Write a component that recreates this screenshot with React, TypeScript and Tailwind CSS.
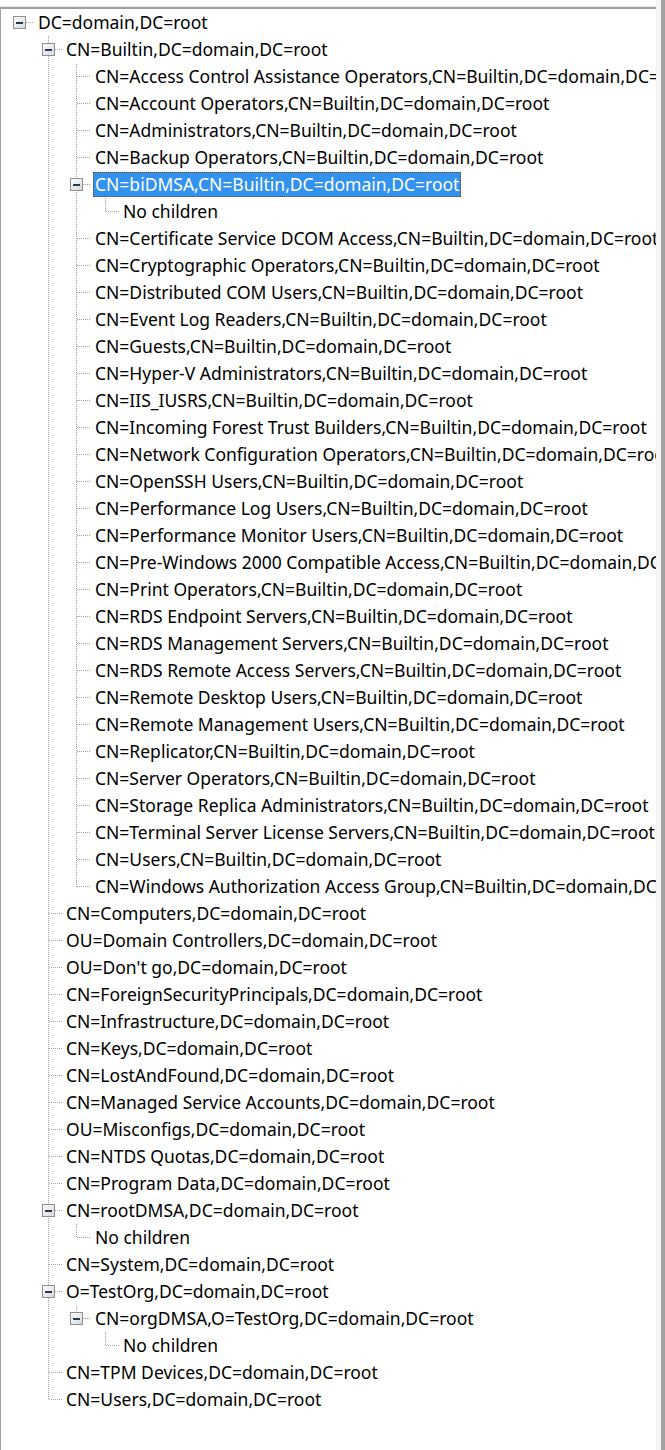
import React from 'react';

type TreeNode = {
  label: string;
  selected?: boolean;
  children?: TreeNode[];
};

const builtin = (name: string): TreeNode => ({ label: `CN=${name},CN=Builtin,DC=domain,DC=root` });
const top = (rdn: string): TreeNode => ({ label: `${rdn},DC=domain,DC=root` });
const noChildren: TreeNode = { label: 'No children' };

const tree: TreeNode = {
  label: 'DC=domain,DC=root',
  children: [
    {
      label: 'CN=Builtin,DC=domain,DC=root',
      children: [
        builtin('Access Control Assistance Operators'),
        builtin('Account Operators'),
        builtin('Administrators'),
        builtin('Backup Operators'),
        { label: 'CN=biDMSA,CN=Builtin,DC=domain,DC=root', selected: true, children: [noChildren] },
        builtin('Certificate Service DCOM Access'),
        builtin('Cryptographic Operators'),
        builtin('Distributed COM Users'),
        builtin('Event Log Readers'),
        builtin('Guests'),
        builtin('Hyper-V Administrators'),
        builtin('IIS_IUSRS'),
        builtin('Incoming Forest Trust Builders'),
        builtin('Network Configuration Operators'),
        builtin('OpenSSH Users'),
        builtin('Performance Log Users'),
        builtin('Performance Monitor Users'),
        builtin('Pre-Windows 2000 Compatible Access'),
        builtin('Print Operators'),
        builtin('RDS Endpoint Servers'),
        builtin('RDS Management Servers'),
        builtin('RDS Remote Access Servers'),
        builtin('Remote Desktop Users'),
        builtin('Remote Management Users'),
        builtin('Replicator'),
        builtin('Server Operators'),
        builtin('Storage Replica Administrators'),
        builtin('Terminal Server License Servers'),
        builtin('Users'),
        builtin('Windows Authorization Access Group'),
      ],
    },
    top('CN=Computers'),
    top('OU=Domain Controllers'),
    top("OU=Don't go"),
    top('CN=ForeignSecurityPrincipals'),
    top('CN=Infrastructure'),
    top('CN=Keys'),
    top('CN=LostAndFound'),
    top('CN=Managed Service Accounts'),
    top('OU=Misconfigs'),
    top('CN=NTDS Quotas'),
    top('CN=Program Data'),
    { ...top('CN=rootDMSA'), children: [noChildren] },
    top('CN=System'),
    {
      ...top('O=TestOrg'),
      children: [{ label: 'CN=orgDMSA,O=TestOrg,DC=domain,DC=root', children: [noChildren] }],
    },
    top('CN=TPM Devices'),
    top('CN=Users'),
  ],
};

type Row = {
  label: string;
  level: number;
  guides: boolean[];
  isLast: boolean;
  hasParent: boolean;
  expanded: boolean;
  selected: boolean;
};

function flatten(node: TreeNode, level: number, guides: boolean[], isLast: boolean, hasParent: boolean, out: Row[]) {
  out.push({
    label: node.label,
    level,
    guides,
    isLast,
    hasParent,
    expanded: !!node.children,
    selected: !!node.selected,
  });
  const kids = node.children ?? [];
  kids.forEach((kid, i) => flatten(kid, level + 1, [...guides, !isLast], i === kids.length - 1, true, out));
  return out;
}

const rows = flatten(tree, 0, [], true, false, []);

const LINE = '#a0a0a0';

// one indent column of the tree: guide lines, connector and the expander box
function Cell({ col, rowIndex, guide, node }: { col: number; rowIndex: number; guide?: boolean; node?: Row }) {
  const w = col % 2 === 0 ? 29 : 28;
  const x = 14.5;
  const phase = (rowIndex + 1) % 2;
  return (
    <svg width={w} height={27} className="shrink-0 block" shapeRendering="crispEdges">
      <defs>
        <linearGradient id={`g${rowIndex}-${col}`} x1="0" y1="0" x2="1" y2="1">
          <stop offset="0" stopColor="#ffffff" />
          <stop offset="1" stopColor="#d6d6d6" />
        </linearGradient>
      </defs>
      {guide && <line x1={x} y1={0} x2={x} y2={27} stroke={LINE} strokeDasharray="1 1" strokeDashoffset={phase} />}
      {node && (
        <>
          {node.hasParent && (
            <line x1={x} y1={0} x2={x} y2={node.isLast ? 13.5 : 27} stroke={LINE} strokeDasharray="1 1" strokeDashoffset={phase} />
          )}
          <line x1={15} y1={13.5} x2={w} y2={13.5} stroke={LINE} strokeDasharray="1 1" />
          {node.expanded && (
            <>
              <rect x={8.5} y={7.5} width={12} height={12} rx={1} fill={`url(#g${rowIndex}-${col})`} stroke="#8e8f8f" />
              <rect x={11} y={13} width={7} height={1.5} fill="#24375a" />
            </>
          )}
        </>
      )}
    </svg>
  );
}

export default function App() {
  return (
    <div className="flex w-[665px] h-[1450px] bg-white font-['Noto_Sans','DejaVu_Sans',sans-serif] text-[17.5px] text-black">
      <div className="flex w-[656px] flex-col">
        <div className="h-[7px] shrink-0 border-b border-[#e3e3e3] bg-white" />
        <div className="flex-1 overflow-hidden border-l border-t-2 border-[#a0a0a0] pl-[4px]">
          {rows.map((row, i) => (
            <div key={i} className="flex h-[27px] items-center whitespace-nowrap">
              {row.guides.map((g, c) => (
                <Cell key={c} col={c} rowIndex={i} guide={g} />
              ))}
              <Cell col={row.level} rowIndex={i} node={row} />
              <span
                className={
                  row.selected
                    ? 'ml-[2px] h-[25px] px-[2px] leading-[25px] bg-[#3392f0] text-white outline-1 outline-dotted -outline-offset-1 outline-[#6b4a1e]'
                    : 'ml-[2px] h-[25px] px-[2px] leading-[25px]'
                }
              >
                {row.label}
              </span>
            </div>
          ))}
        </div>
      </div>
      <div className="w-[5px] bg-[#f4f4f4]" />
      <div className="w-[4px] bg-[#a0a0a0]" />
    </div>
  );
}
